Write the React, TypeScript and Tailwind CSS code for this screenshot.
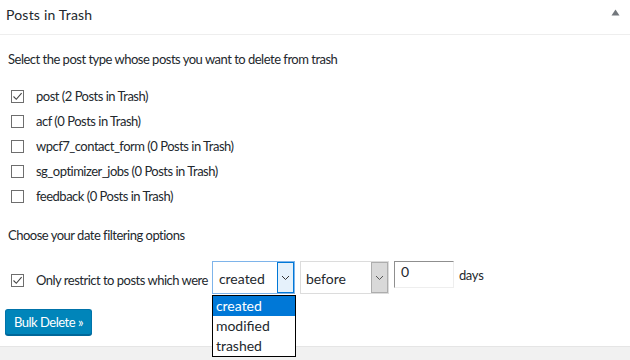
import React from 'react';

const font = { fontFamily: 'Lato, "Open Sans", sans-serif' };

function Box({ checked = false }: { checked?: boolean }) {
  return (
    <span className="flex h-[13px] w-[13px] shrink-0 items-center justify-center border border-[#6e6e6e] bg-white">
      {checked && (
        <svg width="11" height="11" viewBox="0 0 11 11" fill="none">
          <path d="M1.5 5.5 L4.3 8.3 L9.6 2.2" stroke="#444" strokeWidth="1.1" />
        </svg>
      )}
    </span>
  );
}

function Chevron({ color = '#333' }: { color?: string }) {
  return (
    <svg width="9" height="6" viewBox="0 0 9 6" fill="none">
      <path d="M1 1 L4.5 4.5 L8 1" stroke={color} strokeWidth="1" />
    </svg>
  );
}

const types = [
  { name: 'post', count: 2, checked: true },
  { name: 'acf', count: 0 },
  { name: 'wpcf7_contact_form', count: 0 },
  { name: 'sg_optimizer_jobs', count: 0 },
  { name: 'feedback', count: 0 },
];

export default function App() {
  return (
    <div className="flex h-[360px] w-[630px] flex-col overflow-hidden bg-[#f1f1f1] text-[#23282d]" style={font}>
      <div className="flex flex-col bg-white">
        {/* header */}
        <div className="flex h-[35px] items-start justify-between border-b border-[#eeeeee] pl-[6px] pr-[10px] pt-[5px]">
          <h2 className="text-[14px] leading-[20px] tracking-[0.2px] text-[#23282d]">Posts in Trash</h2>
          <svg width="9" height="7" viewBox="0 0 9 7" className="mt-[4px]">
            <path d="M4.5 0.5 L8.5 6.5 L0.5 6.5 Z" fill="#72777c" />
          </svg>
        </div>

        <div className="flex flex-col px-[8px] pb-[11px] pt-[15px] text-[13px] leading-[18px] tracking-[-0.5px]">
          <p>Select the post type whose posts you want to delete from trash</p>

          <div className="mt-[19px] flex flex-col gap-[7px]">
            {types.map((t) => (
              <label key={t.name} className="flex h-[18px] items-center gap-[12px] pl-[3px]">
                <Box checked={t.checked} />
                <span>
                  {t.name} ({t.count} Posts in Trash)
                </span>
              </label>
            ))}
          </div>

          <p className="mt-[21px]">Choose your date filtering options</p>

          <div className="mt-[17px] flex items-start gap-[4px] pl-[3px]">
            <div className="mt-[10px] flex items-center gap-[12px]">
              <Box checked />
              <span>Only restrict to posts which were</span>
            </div>
            <div className="flex items-start gap-[5px] tracking-normal">
              <div className="relative">
                <div className="flex h-[33px] w-[83px] items-stretch border border-[#7eb4ea] bg-white">
                  <span className="flex flex-1 items-center pl-[6px] pt-[2px] text-[14px]">created</span>
                  <span className="flex w-[17px] items-center justify-center border border-[#0078d7] bg-[#e5f1fb]">
                    <Chevron />
                  </span>
                </div>
                <ul className="absolute left-0 top-[34px] z-10 flex w-[84px] flex-col border border-black bg-white text-[14px] leading-[20px]">
                  <li className="bg-[#0078d7] pl-[3px] text-white">created</li>
                  <li className="pl-[3px]">modified</li>
                  <li className="pl-[3px]">trashed</li>
                </ul>
              </div>
              <div className="flex h-[33px] w-[89px] items-stretch border border-[#dcdcdc] bg-white">
                <span className="flex flex-1 items-center pl-[5px] pt-[2px] text-[14px]">before</span>
                <span className="flex w-[17px] items-center justify-center border border-[#adadad] bg-[#d9d9d9]">
                  <Chevron color="#555" />
                </span>
              </div>
              <div className="flex items-center gap-[5px]">
                <div className="flex h-[27px] w-[60px] items-start border-l border-t border-[#8f8f8f] border-b border-r border-b-[#eeeeee] border-r-[#eeeeee] bg-white pl-[6px] pt-[1px] text-[14px]">
                  0
                </div>
                <span className="text-[13px] tracking-[-0.3px]">days</span>
              </div>
            </div>
          </div>

          <div className="-ml-[3px] mt-[15px]">
            <button className="h-[26px] rounded-[3px] border border-[#0073aa] border-b-[#006799] bg-[#0085ba] px-[8px] text-[13px] text-white shadow-[0_1px_0_#006799]">
              Bulk Delete »
            </button>
          </div>
        </div>
      </div>
      <div className="border-t border-[#e5e5e5]" />
    </div>
  );
}
